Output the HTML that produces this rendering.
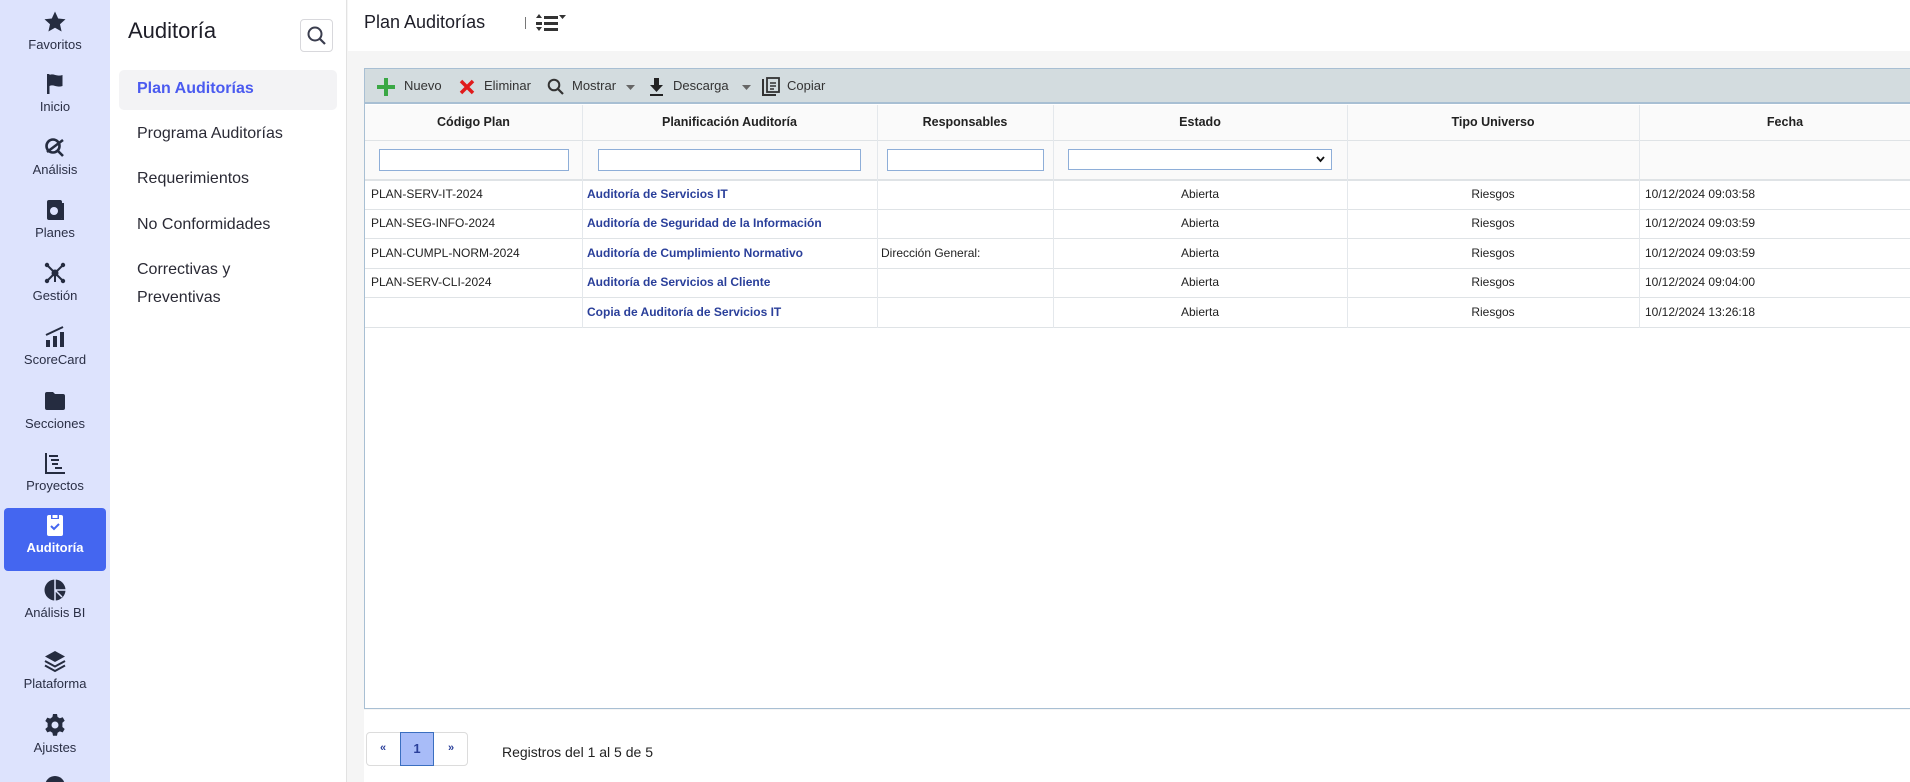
<!DOCTYPE html>
<html style="overflow:hidden;height:782px"><head><meta charset="utf-8"><style>
*{box-sizing:border-box;margin:0;padding:0}
body{width:1910px;height:782px;overflow:hidden;font-family:"Liberation Sans",sans-serif;background:#f5f5f5;position:relative;color:#222}
.a{position:absolute}
#rail{left:0;top:0;width:110px;height:782px;background:#dde3fd;overflow:hidden}
.ri{position:absolute;left:0;width:110px;text-align:center;font-size:13px;color:#2a2f45}
.ri svg{display:block;margin:0 auto 3px}
#menu{left:110px;top:0;width:237px;height:782px;background:#fff;border-right:1px solid #e2e2e2}
.mi{position:absolute;left:27px;font-size:16px;color:#2a2a35;line-height:28px}
#hdr{left:348px;top:0;width:1562px;height:51px;background:#fff}
#grid{left:364px;top:68px;width:1560px;height:641px;background:#fff;border:1px solid #a8bfd3}
#tb{left:0;top:0;width:100%;height:35px;background:#d3dcdf;border-bottom:2px solid #a8bfd3}
.tt{position:absolute;top:9px;font-size:13px;color:#333}
.cb{position:absolute;top:0;height:259px;border-left:1px solid #e4e8ec}
.hr{position:absolute;left:0;width:100%;border-top:1px solid #dfe3e6}
.th{position:absolute;top:36px;height:35px;line-height:35px;font-size:12.5px;font-weight:bold;text-align:center;color:#222}
.inp{position:absolute;height:22px;border:1px solid #8eaed8;background:#fff}
.td{position:absolute;font-size:12px;line-height:29px;color:#222;white-space:nowrap}
.lk{color:#2a3f9a;font-weight:bold}
</style></head><body>
<div id="rail" class="a">
 <div class="ri" style="top:10px"><svg width="24" height="24" viewBox="0 0 24 24"><path fill="#252c40" d="M12 1.5l3.2 7 7.3.7-5.5 5 1.6 7.3L12 17.8l-6.6 3.7L7 14.2 1.5 9.2l7.3-.7z"/></svg>Favoritos</div>
 <div class="ri" style="top:72px"><svg width="24" height="24" viewBox="0 0 24 24"><path fill="#252c40" d="M4 2h2.5v20H4zM6.5 3c4-2 7 2 13 0v11c-6 2-9-2-13 0z"/></svg>Inicio</div>
 <div class="ri" style="top:135px"><svg width="24" height="24" viewBox="0 0 24 24"><circle cx="10" cy="11" r="6.5" fill="none" stroke="#252c40" stroke-width="2.6"/><path d="M15 16l5 5M4 17L20 5" stroke="#252c40" stroke-width="2.6"/></svg>Análisis</div>
 <div class="ri" style="top:198px"><svg width="24" height="24" viewBox="0 0 24 24"><rect x="4" y="2" width="15" height="20" rx="2" fill="#252c40"/><circle cx="11" cy="13" r="4" fill="#dde3fd"/><path d="M19 5h2v17H8v-1h11z" fill="#252c40"/></svg>Planes</div>
 <div class="ri" style="top:261px"><svg width="24" height="24" viewBox="0 0 24 24"><path d="M4 4l16 16M20 4L4 20M12 12v9" stroke="#252c40" stroke-width="2"/><circle cx="12" cy="12" r="3.5" fill="#252c40"/><circle cx="4" cy="4" r="2.2" fill="#252c40"/><circle cx="20" cy="4" r="2.2" fill="#252c40"/><circle cx="4" cy="20" r="2.2" fill="#252c40"/><circle cx="20" cy="20" r="2.2" fill="#252c40"/></svg>Gestión</div>
 <div class="ri" style="top:325px"><svg width="24" height="24" viewBox="0 0 24 24"><path fill="#252c40" d="M3 15h4v7H3zM10 11h4v11h-4zM17 7h4v15h-4z"/><path d="M3 10L20 2" stroke="#252c40" stroke-width="2"/></svg>ScoreCard</div>
 <div class="ri" style="top:389px"><svg width="24" height="24" viewBox="0 0 24 24"><path fill="#252c40" d="M2 5a2 2 0 012-2h6l2 2h8a2 2 0 012 2v12a2 2 0 01-2 2H4a2 2 0 01-2-2z"/></svg>Secciones</div>
 <div class="ri" style="top:451px"><svg width="24" height="24" viewBox="0 0 24 24"><path d="M3 2v20h19" fill="none" stroke="#252c40" stroke-width="2"/><path d="M6 5h9M8 9h8M9 13h6M12 17h7" stroke="#252c40" stroke-width="2"/></svg>Proyectos</div>
 <div class="a" style="left:4px;top:508px;width:102px;height:63px;background:#4466f0;border-radius:4px"></div>
 <div class="ri" style="top:513px;color:#fff;font-weight:bold"><svg width="24" height="24" viewBox="0 0 24 24"><rect x="4" y="2" width="16" height="21" rx="2" fill="#fff"/><rect x="8" y="1" width="8" height="5" fill="#4466f0"/><rect x="9.5" y="2" width="5" height="3" fill="#fff"/><path d="M8 13l3 3 5-5" fill="none" stroke="#4466f0" stroke-width="2"/></svg>Auditoría</div>
 <div class="ri" style="top:578px"><svg width="24" height="24" viewBox="0 0 24 24"><circle cx="12" cy="12" r="10.5" fill="#252c40"/><path d="M12 1.5V22.5M12 12h10.5M12 12l7 7" stroke="#dde3fd" stroke-width="1.5"/></svg>Análisis BI</div>
 <div class="ri" style="top:649px"><svg width="24" height="24" viewBox="0 0 24 24"><path fill="#252c40" d="M12 2l10 5.5-10 5.5L2 7.5z"/><path d="M2 12l10 5.5L22 12M2 16.5l10 5.5 10-5.5" fill="none" stroke="#252c40" stroke-width="2"/></svg>Plataforma</div>
 <div class="ri" style="top:713px"><svg width="24" height="24" viewBox="0 0 24 24"><path fill="#252c40" d="M10 1h4l.6 3 2.2 1.3 2.9-1 2 3.4-2.3 2V14l2.3 2-2 3.4-2.9-1-2.2 1.3-.6 3h-4l-.6-3-2.2-1.3-2.9 1-2-3.4 2.3-2V10L2.3 8l2-3.4 2.9 1L9.4 4z"/><circle cx="12" cy="12" r="3.5" fill="#dde3fd"/></svg>Ajustes</div>
 <div class="a" style="left:45px;top:776px;width:20px;height:20px;border-radius:50%;background:#252c40"></div>
</div>
<div id="menu" class="a">
 <div class="a" style="left:18px;top:18px;font-size:22px;color:#1e1e28">Auditoría</div>
 <div class="a" style="left:190px;top:19px;width:33px;height:33px;border:1px solid #d8d8dc;border-radius:4px;background:#fff"><svg width="31" height="31" viewBox="0 0 31 31"><circle cx="14" cy="14" r="6.5" fill="none" stroke="#3a3d4e" stroke-width="2"/><path d="M19 19l5 5" stroke="#3a3d4e" stroke-width="2.2"/></svg></div>
 <div class="a" style="left:9px;top:70px;width:218px;height:40px;background:#f3f3f5;border-radius:5px"></div>
 <div class="mi" style="top:75px;color:#4a5af0;font-weight:bold">Plan Auditorías</div>
 <div class="mi" style="top:120px">Programa Auditorías</div>
 <div class="mi" style="top:165px">Requerimientos</div>
 <div class="mi" style="top:211px">No Conformidades</div>
 <div class="mi" style="top:256px">Correctivas y<br>Preventivas</div>
</div>
<div id="hdr" class="a">
 <div class="a" style="left:16px;top:12px;font-size:18px;color:#1e1e28">Plan Auditorías</div>
 <div class="a" style="left:177px;top:17px;width:1px;height:12px;background:#777"></div>
 <svg class="a" style="left:188px;top:13px" width="32" height="22" viewBox="0 0 32 22"><path d="M3 1l3 4H0zM3 18l3-4H0z" fill="#333"/><path d="M0 9h6v3H0zM8 3h14v3H8zM8 9h14v3H8zM8 15h14v3H8z" fill="#333"/><path d="M23 2h7l-3.5 4z" fill="#333"/></svg>
</div>
<div id="grid" class="a">
 <div id="tb" class="a">
  <svg class="a" style="left:12px;top:9px" width="18" height="18" viewBox="0 0 18 18"><path d="M7 0h4v7h7v4h-7v7H7v-7H0V7h7z" fill="#3aa845"/></svg>
  <div class="tt" style="left:39px">Nuevo</div>
  <svg class="a" style="left:94px;top:10px" width="16" height="16" viewBox="0 0 16 16"><path d="M2 2l12 12M14 2L2 14" stroke="#e01b1b" stroke-width="3.5"/></svg>
  <div class="tt" style="left:119px">Eliminar</div>
  <svg class="a" style="left:182px;top:9px" width="17" height="17" viewBox="0 0 17 17"><circle cx="7" cy="7" r="5.3" fill="none" stroke="#333" stroke-width="2"/><path d="M11 11l5 5" stroke="#333" stroke-width="2.2"/></svg>
  <div class="tt" style="left:207px">Mostrar</div>
  <svg class="a" style="left:261px;top:16px" width="9" height="5"><path d="M0 0h9L4.5 5z" fill="#666"/></svg>
  <svg class="a" style="left:284px;top:9px" width="15" height="18" viewBox="0 0 15 18"><path d="M5 0h5v7h4l-6.5 7L1 7h4z" fill="#222"/><path d="M1 16h13v2H1z" fill="#222"/></svg>
  <div class="tt" style="left:308px">Descarga</div>
  <svg class="a" style="left:377px;top:16px" width="9" height="5"><path d="M0 0h9L4.5 5z" fill="#666"/></svg>
  <svg class="a" style="left:397px;top:8px" width="18" height="19" viewBox="0 0 18 19"><path d="M1 2v16h13" fill="none" stroke="#333" stroke-width="2"/><rect x="5" y="1" width="12" height="14" fill="none" stroke="#333" stroke-width="1.8"/><path d="M8 6h6M8 9h6M8 12h4" stroke="#333" stroke-width="1.5"/></svg>
  <div class="tt" style="left:422px">Copiar</div>
 </div>
 <div class="a" style="left:0;top:36px;width:100%;height:74px;background:#fafafa"></div>
 <div class="a" style="left:0;top:110px;width:100%;height:149px;background:#fff"></div>
 <div class="hr" style="top:71px"></div>
 <div class="hr" style="top:110px;border-top:2px solid #dfe3e6"></div>
 <div class="hr" style="top:140px"></div><div class="hr" style="top:169px"></div><div class="hr" style="top:199px"></div><div class="hr" style="top:228px"></div><div class="hr" style="top:258px"></div>
 <div class="cb" style="left:217px;top:36px;height:223px"></div>
 <div class="cb" style="left:512px;top:36px;height:223px"></div>
 <div class="cb" style="left:688px;top:36px;height:223px"></div>
 <div class="cb" style="left:982px;top:36px;height:223px"></div>
 <div class="cb" style="left:1274px;top:36px;height:223px"></div>
 <div class="th" style="left:0;width:217px">Código Plan</div>
 <div class="th" style="left:217px;width:295px">Planificación Auditoría</div>
 <div class="th" style="left:512px;width:176px">Responsables</div>
 <div class="th" style="left:688px;width:294px">Estado</div>
 <div class="th" style="left:982px;width:292px">Tipo Universo</div>
 <div class="th" style="left:1274px;width:292px">Fecha</div>
 <div class="inp" style="left:14px;top:80px;width:190px"></div>
 <div class="inp" style="left:233px;top:80px;width:263px"></div>
 <div class="inp" style="left:522px;top:80px;width:157px"></div>
 <div class="inp" style="left:703px;top:80px;width:264px;height:21px"><svg class="a" style="right:6px;top:6px" width="9" height="7"><path d="M1 1l3.5 4L8 1" fill="none" stroke="#111" stroke-width="1.8"/></svg></div>
 <div class="td" style="left:6px;top:111px">PLAN-SERV-IT-2024</div>
 <div class="td lk" style="left:222px;top:111px">Auditoría de Servicios IT</div>
 <div class="td" style="left:688px;width:294px;text-align:center;top:111px">Abierta</div>
 <div class="td" style="left:982px;width:292px;text-align:center;top:111px">Riesgos</div>
 <div class="td" style="left:1280px;top:111px">10/12/2024 09:03:58</div>
 <div class="td" style="left:6px;top:140px">PLAN-SEG-INFO-2024</div>
 <div class="td lk" style="left:222px;top:140px">Auditoría de Seguridad de la Información</div>
 <div class="td" style="left:688px;width:294px;text-align:center;top:140px">Abierta</div>
 <div class="td" style="left:982px;width:292px;text-align:center;top:140px">Riesgos</div>
 <div class="td" style="left:1280px;top:140px">10/12/2024 09:03:59</div>
 <div class="td" style="left:6px;top:170px">PLAN-CUMPL-NORM-2024</div>
 <div class="td lk" style="left:222px;top:170px">Auditoría de Cumplimiento Normativo</div>
 <div class="td" style="left:516px;top:170px">Dirección General:</div>
 <div class="td" style="left:688px;width:294px;text-align:center;top:170px">Abierta</div>
 <div class="td" style="left:982px;width:292px;text-align:center;top:170px">Riesgos</div>
 <div class="td" style="left:1280px;top:170px">10/12/2024 09:03:59</div>
 <div class="td" style="left:6px;top:199px">PLAN-SERV-CLI-2024</div>
 <div class="td lk" style="left:222px;top:199px">Auditoría de Servicios al Cliente</div>
 <div class="td" style="left:688px;width:294px;text-align:center;top:199px">Abierta</div>
 <div class="td" style="left:982px;width:292px;text-align:center;top:199px">Riesgos</div>
 <div class="td" style="left:1280px;top:199px">10/12/2024 09:04:00</div>
 <div class="td lk" style="left:222px;top:229px">Copia de Auditoría de Servicios IT</div>
 <div class="td" style="left:688px;width:294px;text-align:center;top:229px">Abierta</div>
 <div class="td" style="left:982px;width:292px;text-align:center;top:229px">Riesgos</div>
 <div class="td" style="left:1280px;top:229px">10/12/2024 13:26:18</div>
</div>
<div class="a" style="left:348px;top:710px;width:1562px;height:72px;background:#fff"></div>
<div class="a" style="left:348px;top:710px;width:16px;height:72px;background:#f5f5f5"></div>
<div class="a" style="left:366px;top:732px;width:102px;height:34px;border:1px solid #dcdcdc;border-radius:4px;background:#fff"></div>
<div class="a" style="left:366px;top:742px;width:34px;text-align:center;font-size:11px;font-weight:bold;color:#2a3f9a">«</div>
<div class="a" style="left:400px;top:732px;width:34px;height:34px;background:#a8bcf8;border:1px solid #3b6fc0;text-align:center;line-height:32px;font-size:13px;font-weight:bold;color:#2a3f9a">1</div>
<div class="a" style="left:434px;top:742px;width:34px;text-align:center;font-size:11px;font-weight:bold;color:#2a3f9a">»</div>
<div class="a" style="left:502px;top:744px;font-size:14px;color:#222">Registros del 1 al 5 de 5</div>
</body></html>
